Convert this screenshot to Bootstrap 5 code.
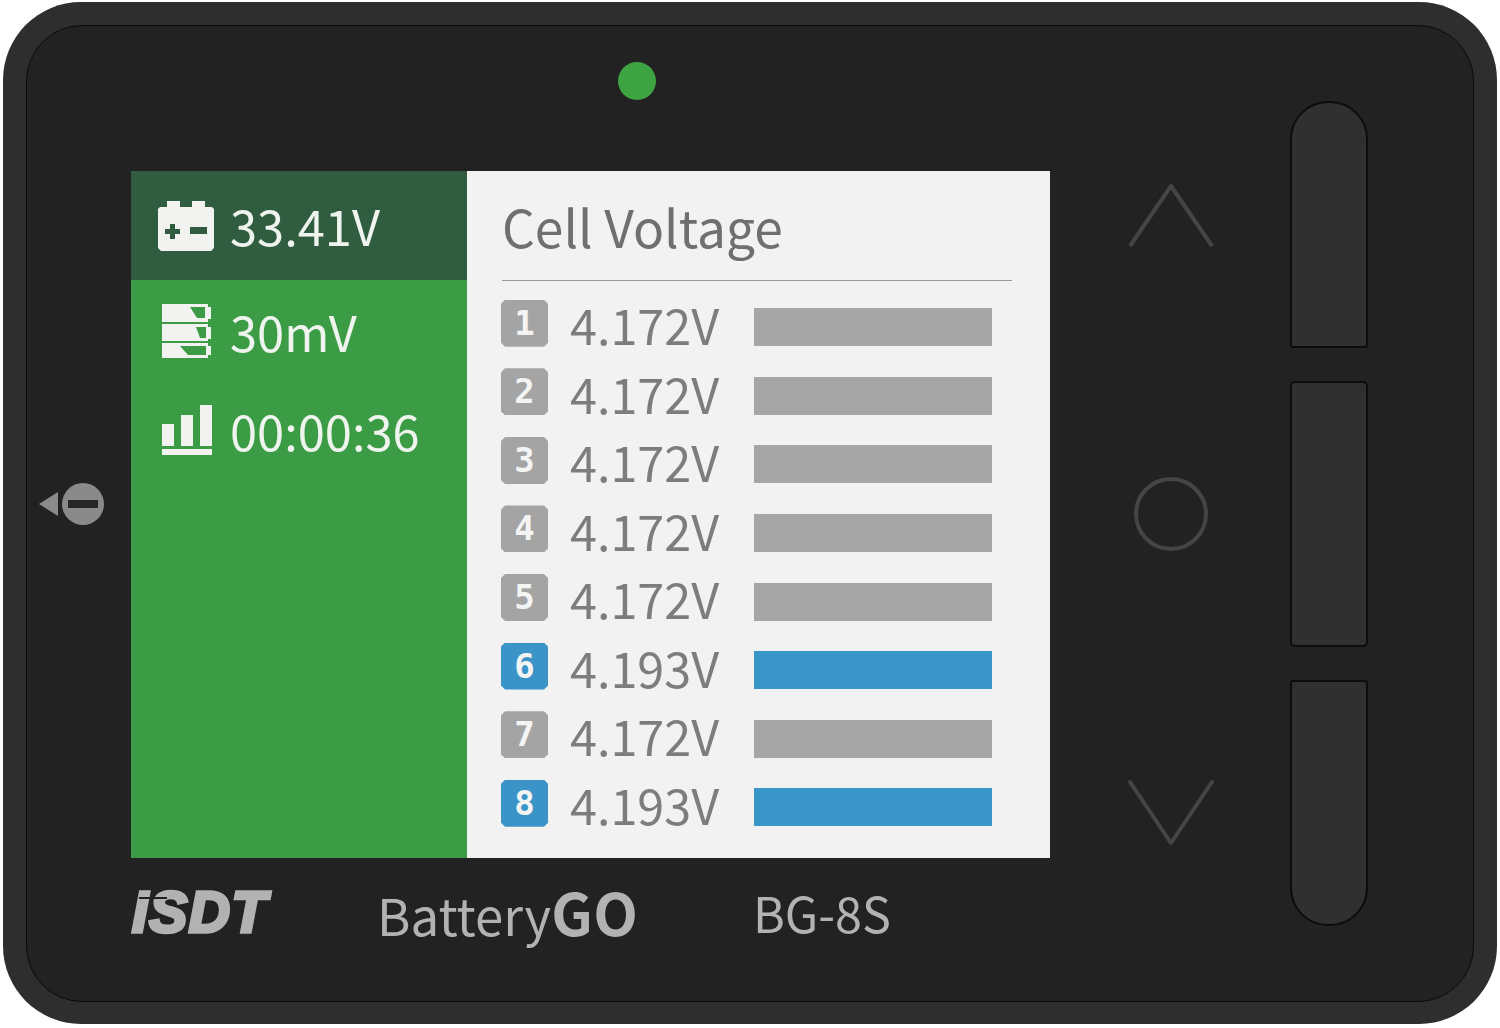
<!DOCTYPE html>
<html lang="en"><head><meta charset="utf-8"><title>BatteryGO BG-8S</title>
<link rel="stylesheet" href="https://cdn.jsdelivr.net/npm/bootstrap@5.3.0/dist/css/bootstrap.min.css">
<style>
html,body{background:#fff;overflow:hidden}
body{padding:2px 3px 4px;font-family:"Noto Sans CJK SC","Noto Sans",sans-serif}
.shell{width:1494px;height:1022px;background:#2e2e2e;border-radius:78px;padding:23px 23px 22px 23px;position:relative}
.face{height:100%;background:#222;border:1px solid #0b0b0b;border-radius:56px}
.leftcol{padding:36px 0 0 104px;width:1024px;flex:none}
.led{width:38px;height:38px;border-radius:50%;background:#3ea442;margin:0 0 71px 487px}
.screen{width:919px;height:687px;background:#f2f2f2}
.side{width:336px;background:#3c9c46;color:#eff5ee;font-size:48.8px;line-height:1;flex:none}
.side-top{height:109px;background:#305c40;padding-left:27px;gap:16px}
.side-row{padding-left:31px;gap:18px}
.row-tall{margin-top:47px}
.pane{flex:1;padding:0 38px 0 34px;color:#7d7d7d}
.pane-title{height:110px;border-bottom:1px solid #9a9a9a;font-size:51.5px;line-height:1;margin:0 0 12px 1px;color:#6f6f6f}
.cell{height:68.57px;padding-right:20px}
.num{width:47px;height:47px;background:#a4a4a4;color:#f4f4f4;font:700 34px/46px "DejaVu Sans Mono",monospace;text-align:center;margin:0 22px 8px 0;flex:none;clip-path:polygon(4px 0,calc(100% - 4px) 0,100% 4px,100% calc(100% - 4px),calc(100% - 4px) 100%,4px 100%,0 calc(100% - 4px),0 4px)}
.val{width:184px;font-size:48.5px;line-height:1;flex:none;margin-bottom:6px}
.level{height:38px;flex:1;background:#a6a6a6}
.hi .num{background:#3a94c8}
.hi .level{background:#3a95c9}
.foot{color:#b2b2b2;line-height:1;height:108px}
.brand{width:246px;padding-left:1px;font:italic 700 57px/1 "Liberation Sans",sans-serif;letter-spacing:1.5px;-webkit-text-stroke:3.5px #b2b2b2;position:relative}
.brand::after{content:"";position:absolute;left:8px;top:13px;width:28px;height:2px;background:#222}
.model{width:376px;font-size:51px;margin-bottom:3px}
.model b{font-size:58px;letter-spacing:.5px}
.code{font-size:48.5px}
.midcol{width:239px;flex:none}
.arrow-up{margin-top:156px}
.arrow-dot{margin-top:228px}
.arrow-down{margin-top:227px}
.btncol{width:78px;padding-top:75px;flex:none;gap:33px}
.key{width:78px;background:#303030;border:2px solid #0c0c0c;border-radius:5px}
.key-a{height:247px;border-radius:38px 38px 3px 3px}
.key-b{height:266px}
.key-c{height:246px;border-radius:3px 3px 38px 38px}
.mark-eject{position:absolute;left:36px;top:481px}
</style></head>
<body>
<div class="shell">
 <div class="face d-flex">
  <div class="leftcol">
   <div class="led"></div>
   <div class="screen d-flex">
    <div class="side">
     <div class="side-top d-flex align-items-center">
      <svg width="56" height="50" viewBox="0 0 56 50"><path fill="#f2f3f1" d="M9 0h13v6h12V0h13v6h7l2 2v39l-3 3H3l-3-3V8l2-2h7z"/><path fill="#305c40" d="M12 23h5v5h5v5h-5v5h-5v-5H7v-5h5zM32 26h17v7H32z"/></svg>
      <span>33.41V</span>
     </div>
     <div class="side-row d-flex align-items-center mt-4">
      <svg width="50" height="54" viewBox="0 0 50 54"><g fill="#f2f3f1"><path d="M0 0h46v3h3v12h-3v3H0z"/><path d="M0 20h46v3h3v12h-3v2H0z"/><path d="M0 39h46v3h3v9h-3v3H0z"/></g><g fill="#3c9c46"><path d="M28 3h15v11H35zM34 23h10v11H38zM18 42h26v9H26z"/></g></svg>
      <span>30mV</span>
     </div>
     <div class="side-row row-tall d-flex align-items-center">
      <svg width="50" height="50" viewBox="0 0 50 50"><g fill="#f2f3f1"><path d="M0 19h12v22H0zM19 10h12v31H19zM38 0h12v41H38zM0 44h50v6H0z"/></g></svg>
      <span>00:00:36</span>
     </div>
    </div>
    <div class="pane">
     <div class="pane-title d-flex align-items-center">Cell Voltage</div>
     <div class="cell d-flex align-items-center"><span class="num">1</span><span class="val">4.172V</span><span class="level"></span></div>
     <div class="cell d-flex align-items-center"><span class="num">2</span><span class="val">4.172V</span><span class="level"></span></div>
     <div class="cell d-flex align-items-center"><span class="num">3</span><span class="val">4.172V</span><span class="level"></span></div>
     <div class="cell d-flex align-items-center"><span class="num">4</span><span class="val">4.172V</span><span class="level"></span></div>
     <div class="cell d-flex align-items-center"><span class="num">5</span><span class="val">4.172V</span><span class="level"></span></div>
     <div class="cell hi d-flex align-items-center"><span class="num">6</span><span class="val">4.193V</span><span class="level"></span></div>
     <div class="cell d-flex align-items-center"><span class="num">7</span><span class="val">4.172V</span><span class="level"></span></div>
     <div class="cell hi d-flex align-items-center"><span class="num">8</span><span class="val">4.193V</span><span class="level"></span></div>
    </div>
   </div>
   <div class="foot d-flex align-items-center">
    <span class="brand">ISDT</span>
    <span class="model">Battery<b>GO</b></span>
    <span class="code">BG-8S</span>
   </div>
  </div>
  <div class="midcol d-flex flex-column align-items-center">
   <svg class="arrow-up" width="88" height="66" viewBox="0 0 88 66"><path d="M3 64 44 4l41 60" fill="none" stroke="#454545" stroke-width="4" stroke-linejoin="round"/></svg>
   <svg class="arrow-dot" width="76" height="76" viewBox="0 0 76 76"><circle cx="38" cy="38" r="35" fill="none" stroke="#454545" stroke-width="4"/></svg>
   <svg class="arrow-down" width="88" height="68" viewBox="0 0 88 68"><path d="M3 3 44 64 85 3" fill="none" stroke="#454545" stroke-width="4" stroke-linecap="round" stroke-linejoin="round"/></svg>
  </div>
  <div class="btncol d-flex flex-column">
   <div class="key key-a"></div>
   <div class="key key-b"></div>
   <div class="key key-c"></div>
  </div>
 </div>
 <svg class="mark-eject" width="66" height="42" viewBox="0 0 66 42"><path d="M0 21 19 9v24z" fill="#8a8a8a"/><circle cx="44" cy="21" r="21" fill="#8a8a8a"/><rect x="29" y="17" width="30" height="8" fill="#262626"/></svg>
</div>
</body></html>
